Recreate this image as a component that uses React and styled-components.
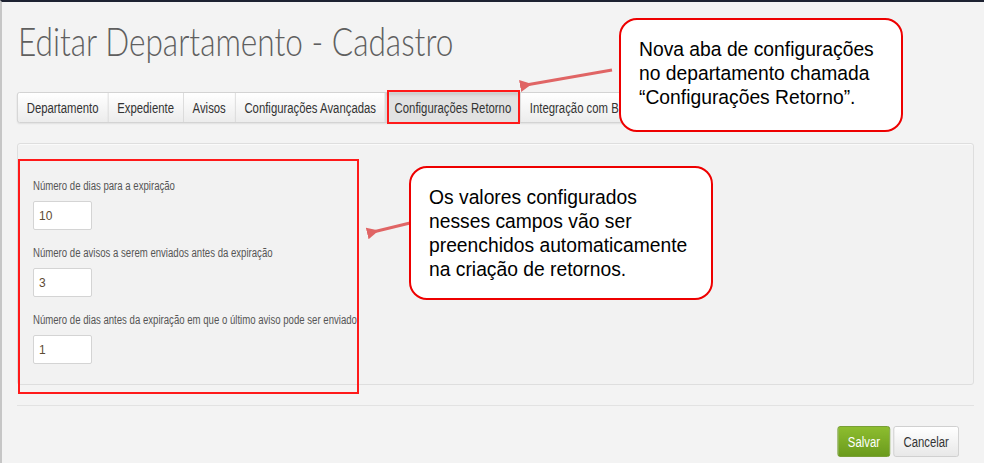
import React from "react";
import styled, { createGlobalStyle } from "styled-components";

const Global = createGlobalStyle`
  html, body { margin: 0; padding: 0; background: #f3f3f3; }
  body { overflow: hidden; }
  * { box-sizing: border-box; }
`;

const UI = `"Liberation Sans", Arial, sans-serif`;
const SQUEEZE = 0.81;

const Page = styled.div`
  position: relative;
  width: 984px;
  height: 463px;
  border-top: 2px solid #1d2231;
  border-left: 2px solid #c6c6c6;
  padding: 0 10px 0 15px;
  display: flex;
  flex-direction: column;
  font-family: ${UI};
  color: #333;
`;

const Title = styled.h1`
  margin: 15px 0 0 1px;
  font-family: Lato, "Open Sans", sans-serif;
  font-weight: 300;
  font-size: 40px;
  line-height: 48px;
  color: #5f5f5f;
  transform-origin: left center;
  transform: scaleX(0.79);
  white-space: nowrap;
`;

const TabBar = styled.div`
  margin-top: 27px;
  display: flex;
  align-self: flex-start;
  height: 31px;
  border: 1px solid #cfcfcf;
  border-radius: 3px;
  background: linear-gradient(#ffffff, #ececec);
  box-shadow: 0 1px 2px rgba(0, 0, 0, 0.08);
  transform-origin: left center;
  transform: scaleX(${SQUEEZE});
`;

const Tab = styled.div`
  display: flex;
  align-items: center;
  padding: 0 11px;
  font-size: 14px;
  color: #333;
  white-space: nowrap;
  border-left: ${(p) => (p.$first ? "none" : "1px solid #d6d6d6")};
  background: ${(p) => (p.$active ? "#e2e2e2" : "transparent")};
  box-shadow: ${(p) => (p.$active ? "inset 0 2px 4px rgba(0,0,0,0.10)" : "none")};
`;

const Panel = styled.div`
  margin-top: 20px;
  border: 1px solid #dedede;
  border-radius: 3px;
  background: #f2f2f2;
  box-shadow: inset 0 1px 0 #fafafa;
  padding: 34px 15px 20px;
  display: flex;
  flex-direction: column;
  gap: 15px;
`;

const Field = styled.div`
  display: flex;
  flex-direction: column;
  align-items: flex-start;
  gap: 7px;
`;

const Label = styled.label`
  font-size: 12px;
  line-height: 16px;
  color: #555;
  white-space: nowrap;
  transform-origin: left center;
  transform: scaleX(0.8);
`;

const Input = styled.div`
  width: 59px;
  height: 29px;
  background: #fff;
  border: 1px solid #d4d4d4;
  border-radius: 2px;
  display: flex;
  align-items: center;
  padding-left: 5px;
  font-size: 12px;
  color: #5d4b33;
`;

const Divider = styled.div`
  margin-top: 20px;
  height: 1px;
  background: #e2e2e2;
`;

const Actions = styled.div`
  margin: 20px 15px 0 0;
  display: flex;
  justify-content: flex-end;
  gap: 4px;
  transform-origin: right center;
  transform: scaleX(${SQUEEZE});
`;

const Button = styled.div`
  height: 31px;
  padding: 0 11.5px;
  display: flex;
  align-items: center;
  border-radius: 3px;
  font-size: 14px;
  color: ${(p) => (p.$primary ? "#fff" : "#333")};
  border: 1px solid ${(p) => (p.$primary ? "#6a9621" : "#cccccc")};
  background: ${(p) =>
    p.$primary
      ? "linear-gradient(#8dbd2f, #6b9b1d)"
      : "linear-gradient(#ffffff, #e8e8e8)"};
`;

const Highlight = styled.div`
  position: absolute;
  border: 2px solid #ff1a1a;
  pointer-events: none;
`;

const Callout = styled.div`
  position: absolute;
  background: #fff;
  border: 2px solid #ee0000;
  border-radius: 18px;
  padding: 18px 18px;
  font-family: "Liberation Sans", Arial, sans-serif;
  font-size: 19.3px;
  line-height: 24px;
  color: #000;
  white-space: nowrap;
`;

const Arrows = styled.svg`
  position: absolute;
  left: 0;
  top: 0;
  pointer-events: none;
`;

const fields = [
  { label: "Número de dias para a expiração", value: "10" },
  { label: "Número de avisos a serem enviados antes da expiração", value: "3" },
  {
    label: "Número de dias antes da expiração em que o último aviso pode ser enviado",
    value: "1",
  },
];

const tabs = [
  "Departamento",
  "Expediente",
  "Avisos",
  "Configurações Avançadas",
  "Configurações Retorno",
  "Integração com Bitrix24",
];

export default function App() {
  return (
    <>
      <Global />
      <Page>
        <Title>Editar Departamento - Cadastro</Title>
        <TabBar>
          {tabs.map((t, i) => (
            <Tab key={t} $first={i === 0} $active={i === 4}>
              {t}
            </Tab>
          ))}
        </TabBar>
        <Panel>
          {fields.map((f) => (
            <Field key={f.label}>
              <Label>{f.label}</Label>
              <Input>{f.value}</Input>
            </Field>
          ))}
        </Panel>
        <Divider />
        <Actions>
          <Button $primary>Salvar</Button>
          <Button>Cancelar</Button>
        </Actions>

        <Highlight style={{ left: 385, top: 88, width: 133, height: 34 }} />
        <Highlight style={{ left: 16, top: 157, width: 341, height: 235 }} />

        <Arrows width="984" height="463" viewBox="0 0 984 463">
          <defs>
            <marker id="ah" markerWidth="4" markerHeight="4" refX="2" refY="2" orient="auto">
              <path d="M4,0 L0,2 L4,4 Z" fill="#e06565" />
            </marker>
          </defs>
          <line x1="610" y1="68" x2="524" y2="83" stroke="#e06565" strokeWidth="3" markerEnd="url(#ah)" />
          <line x1="408" y1="221" x2="371" y2="230" stroke="#e06565" strokeWidth="3" markerEnd="url(#ah)" />
        </Arrows>

        <Callout style={{ left: 617, top: 16, width: 284, height: 114 }}>
          Nova aba de configurações
          <br />
          no departamento chamada
          <br />
          “Configurações Retorno”.
        </Callout>
        <Callout style={{ left: 407, top: 164, width: 304, height: 134 }}>
          Os valores configurados
          <br />
          nesses campos vão ser
          <br />
          preenchidos automaticamente
          <br />
          na criação de retornos.
        </Callout>
      </Page>
    </>
  );
}
